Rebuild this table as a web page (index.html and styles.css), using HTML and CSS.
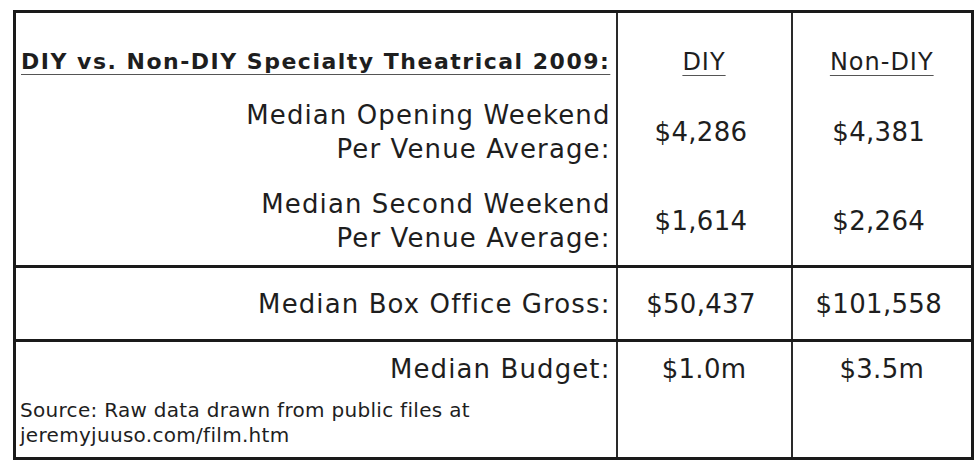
FILE: index.html
```html
<!DOCTYPE html>
<html>
<head>
<meta charset="utf-8">
<link rel="stylesheet" href="styles.css">
</head>
<body>
<table class="stats">
  <colgroup>
    <col class="c-label">
    <col class="c-diy">
    <col class="c-non">
  </colgroup>
  <tbody class="section">
    <tr class="r-head">
      <td class="label head"><span class="u">DIY vs. Non-DIY Specialty Theatrical 2009:</span></td>
      <td class="val colhead"><span class="u">DIY</span></td>
      <td class="val colhead"><span class="u">Non-DIY</span></td>
    </tr>
    <tr class="r-metric">
      <td class="label">Median Opening Weekend<br>Per Venue Average:</td>
      <td class="val">$4,286</td>
      <td class="val">$4,381</td>
    </tr>
    <tr class="r-metric r-last">
      <td class="label">Median Second Weekend<br>Per Venue Average:</td>
      <td class="val">$1,614</td>
      <td class="val">$2,264</td>
    </tr>
  </tbody>
  <tbody class="section">
    <tr class="r-gross">
      <td class="label">Median Box Office Gross:</td>
      <td class="val">$50,437</td>
      <td class="val">$101,558</td>
    </tr>
  </tbody>
  <tbody class="section">
    <tr class="r-budget">
      <td class="label budget">
        <div class="budget-label">Median Budget:</div>
        <div class="source">Source: Raw data drawn from public files at<br>jeremyjuuso.com/film.htm</div>
      </td>
      <td class="val top">$1.0m</td>
      <td class="val top">$3.5m</td>
    </tr>
  </tbody>
</table>
</body>
</html>
```
FILE: styles.css
```css
html, body {
  margin: 0;
  padding: 0;
  background: #ffffff;
}
body {
  padding: 10px 0 0 13px;
  font-family: "DejaVu Sans", Verdana, sans-serif;
  color: #1e1e1e;
}
.stats {
  border-collapse: collapse;
  border: 3px solid #1a1a1a;
  width: 958px;
  table-layout: fixed;
}
.c-label { width: 602px; }
.c-diy { width: 175px; }
.c-non { width: 181px; }
.section {
  border-top: 3px solid #1a1a1a;
}
td {
  padding: 0;
  border-left: 2px solid #2a2a2a;
  font-size: 26px;
  line-height: 34px;
}
td.label {
  border-left: none;
  text-align: right;
  padding-right: 5px;
  letter-spacing: 1.1px;
}
td.val {
  text-align: center;
  vertical-align: middle;
  letter-spacing: 0.3px;
  padding-right: 6px;
}
.u {
  text-decoration: underline;
  text-decoration-thickness: 1px;
  text-decoration-color: #555;
  text-underline-offset: 5px;
}
.r-head { height: 75px; }
.r-head td {
  vertical-align: bottom;
  padding-bottom: 13px;
}
td.head {
  text-align: left;
  padding-left: 5px;
  padding-right: 0;
  white-space: nowrap;
  font-weight: bold;
  font-size: 22px;
  line-height: 24px;
  letter-spacing: 1.5px;
}
td.colhead {
  font-size: 24px;
  line-height: 24px;
  letter-spacing: 1px;
  padding-right: 0;
}
.r-metric { height: 90px; }
.r-gross { height: 74px; }
.r-budget { height: 118px; }
td.budget {
  vertical-align: top;
  padding-top: 10px;
}
td.top {
  vertical-align: top;
  padding-top: 10px;
  padding-right: 0;
}
.source {
  text-align: left;
  padding-left: 4px;
  font-size: 20px;
  line-height: 25px;
  letter-spacing: 0.3px;
  margin-top: 12px;
}
```
